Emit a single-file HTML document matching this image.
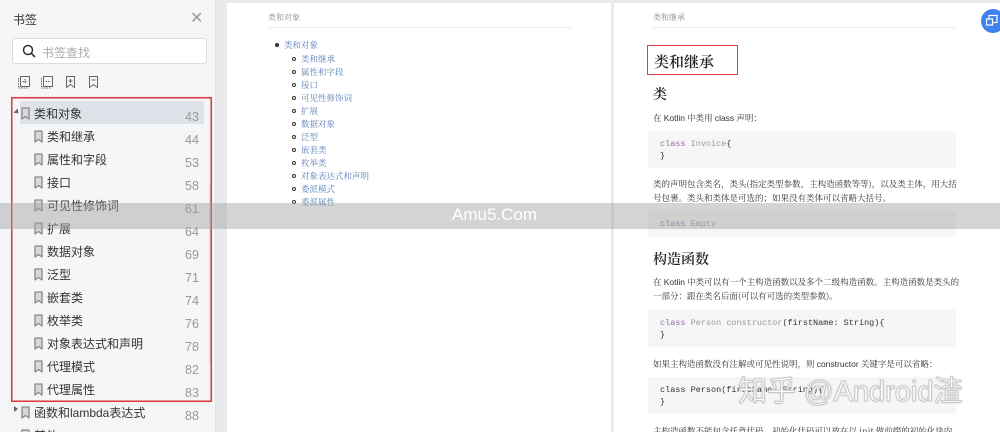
<!DOCTYPE html>
<html><head><meta charset="utf-8"><style>
*{margin:0;padding:0;box-sizing:border-box}
html,body{width:1000px;height:432px;overflow:hidden}
body{background:#e9eaec;font-family:"Liberation Sans","Noto Sans CJK SC",sans-serif;position:relative}
.a{position:absolute}
#side{left:0;top:0;width:216px;height:432px;background:#f5f6f7;border-right:1px solid #e2e3e5}
.it{position:absolute;font-size:12px;color:#333;white-space:nowrap}
.num{position:absolute;font-size:12.5px;color:#999}
.bm{position:absolute}
.page{position:absolute;background:#fff;top:3px;height:440px}
.serif{font-family:"Noto Serif CJK SC","Liberation Serif",serif}
.toc{position:absolute;font-size:8.5px;color:#5b7fb8;font-family:"Noto Serif CJK SC",serif;white-space:nowrap}
.dot{position:absolute;width:4px;height:4px;border:1px solid #333;border-radius:50%}
.p{position:absolute;font-size:8.5px;color:#333;white-space:nowrap;font-family:"Noto Serif CJK SC",serif}
.code{position:absolute;left:648px;width:308px;background:#f6f6f7;font-family:"Liberation Mono",monospace;font-size:8.5px;color:#333;padding:0 0 0 12px;line-height:12px}
.k{color:#9a6aa8}.g{color:#999}
</style></head><body>
<div id="side" class="a">
  <div class="a" style="left:13px;top:11px;font-size:12px;color:#333">书签</div>
  <div class="a" style="left:190px;top:8px;font-size:16px;color:#999">✕</div>
  <div class="a" style="left:12px;top:38px;width:195px;height:26px;background:#fff;border:1px solid #dcdcdc;border-radius:3px"></div>
  <svg class="a" style="left:22px;top:44px" width="14" height="14"><circle cx="6" cy="6" r="4.5" fill="none" stroke="#333" stroke-width="1.5"/><line x1="9.3" y1="9.3" x2="13" y2="13" stroke="#333" stroke-width="1.6"/></svg>
  <div class="a" style="left:42px;top:44px;font-size:12px;color:#aaa">书签查找</div>
  <svg class="a" style="left:17px;top:74px" width="90" height="16" fill="none" stroke="#666" stroke-width="1">
    <rect x="3.5" y="2.5" width="9" height="10"/><path d="M8 5v5M5.5 7.5h5M1.5 4v10h10" stroke-dasharray="1.5 1"/>
    <rect x="26.5" y="2.5" width="9" height="10"/><path d="M28.5 7.5h5M24.5 4v10h10" stroke-dasharray="1.5 1"/>
    <path d="M49.5 2.5h8v11l-4-3-4 3z"/><path d="M53.5 5v4M51.5 7h4"/>
    <path d="M72.5 2.5h8v11l-4-3-4 3z"/><path d="M74.5 6h4"/>
  </svg>
  <div class="a" style="left:20px;top:101px;width:184px;height:23px;background:#dfe2e8"></div>
  <div class="a" style="left:209px;top:183px;width:3px;height:180px;background:#e4e4e4"></div>
  <div class="a" style="left:14px;top:110px;border-left:3px solid transparent;border-right:3px solid transparent;border-top:4px solid #666;transform:rotate(-45deg)"></div>
  <div class="a" style="left:14px;top:406px;border-top:3.5px solid transparent;border-bottom:3.5px solid transparent;border-left:4px solid #666"></div>
</div>
<div id="items"></div>
<svg class="a" style="left:0;top:0" width="220" height="410"><rect x="11.75" y="97.75" width="199.5" height="303.5" fill="none" stroke="#d9403f" stroke-width="1.6"/></svg>
<script>
const L=[["类和对象",43,0],["类和继承",44,1],["属性和字段",53,1],["接口",58,1],["可见性修饰词",61,1],["扩展",64,1],["数据对象",69,1],["泛型",71,1],["嵌套类",74,1],["枚举类",76,1],["对象表达式和声明",78,1],["代理模式",82,1],["代理属性",83,1],["函数和lambda表达式",88,0],["其他",90,0]];
let h="";L.forEach((e,i)=>{const y=105+i*23;const x=e[2]?47:34;
h+=`<svg class="bm" style="left:${x-13}px;top:${y+2}px" width="9" height="13"><path d="M1 1h7v11l-3.5-2.5L1 12z" fill="#d8d8d8" stroke="#888" stroke-width="1.3" stroke-linejoin="round"/></svg><div class="it" style="left:${x}px;top:${y}px">${e[0]}</div><div class="num" style="left:185px;top:${y+5}px">${e[1]}</div>`});
document.getElementById("items").innerHTML=h;
</script>
<div class="page" style="left:227px;width:384px"></div>
<div class="page" style="left:614px;width:386px"></div>
<div class="a serif" style="left:268px;top:12px;font-size:8px;color:#888">类和对象</div>
<div class="a" style="left:267px;top:27px;width:305px;height:1px;background:#eee"></div>
<div class="dot" style="left:275px;top:43px;background:#333"></div>
<div class="toc" style="left:284px;top:39px">类和对象</div>
<div id="toc"></div>
<script>
const T=["类和继承","属性和字段","接口","可见性修饰词","扩展","数据对象","泛型","嵌套类","枚举类","对象表达式和声明","委派模式","委派属性"];
let t="";T.forEach((s,i)=>{const y=53+i*13;t+=`<div class="dot" style="left:292px;top:${y+4}px"></div><div class="toc" style="left:301px;top:${y}px">${s}</div>`});
document.getElementById("toc").innerHTML=t;
</script>
<div class="a serif" style="left:653px;top:12px;font-size:8px;color:#888">类和继承</div>
<div class="a" style="left:652px;top:27px;width:304px;height:1px;background:#eee"></div>
<div class="a" style="left:647px;top:45px;width:91px;height:30px;border:1.5px solid #d9403f"></div>
<div class="a serif" style="left:654px;top:51px;font-size:15px;color:#222;font-weight:600">类和继承</div>
<div class="a serif" style="left:653px;top:84px;font-size:14px;color:#222;font-weight:600">类</div>
<div class="p" style="left:653px;top:112px">在 <span style="font-family:Liberation Sans">Kotlin</span> 中类用 <span style="font-family:Liberation Sans">class</span> 声明：</div>
<div class="code" style="top:131px;height:37px;padding-top:7px"><span class="k">class</span> <span class="g">Invoice</span>{<br>}</div>
<div class="p" style="left:653px;top:178px">类的声明包含类名，类头(指定类型参数，主构造函数等等)，以及类主体，用大括</div>
<div class="p" style="left:653px;top:192px">号包裹。类头和类体是可选的；如果没有类体可以省略大括号。</div>
<div class="code" style="top:211px;height:26px;padding-top:7px"><span class="k">class</span> <span class="g">Empty</span></div>
<div class="a serif" style="left:653px;top:249px;font-size:14px;color:#222;font-weight:600">构造函数</div>
<div class="p" style="left:653px;top:276px">在 <span style="font-family:Liberation Sans">Kotlin</span> 中类可以有一个主构造函数以及多个二级构造函数。主构造函数是类头的</div>
<div class="p" style="left:653px;top:290px">一部分：跟在类名后面(可以有可选的类型参数)。</div>
<div class="code" style="top:310px;height:37px;padding-top:7px"><span class="k">class</span> <span class="g">Person constructor</span>(firstName: String){<br>}</div>
<div class="p" style="left:653px;top:358px">如果主构造函数没有注解或可见性说明，则 <span style="font-family:Liberation Sans">constructor</span> 关键字是可以省略：</div>
<div class="code" style="top:377px;height:37px;padding-top:7px">class Person(firstName: String){<br>}</div>
<div class="p" style="left:653px;top:425px">主构造函数不能包含任意代码，初始化代码可以放在以 init 做前缀的初始化块内</div>
<div class="a" style="left:0;top:203px;width:1000px;height:26px;background:rgba(160,160,160,0.45)"></div>
<div class="a" style="left:452px;top:205px;font-size:17px;color:#fff">Amu5.Com</div>
<div class="a" style="left:738px;top:368px;font-size:29px;color:#fff;white-space:nowrap;-webkit-text-stroke:1px #c8c8c8;text-shadow:0 0 2px #bbb">知乎 @Android渣</div>
<div class="a" style="left:981px;top:9px;width:24px;height:24px;border-radius:50%;background:#3e82ee"></div>
<svg class="a" style="left:985px;top:14px" width="14" height="14" fill="none" stroke="#fff" stroke-width="1.2"><rect x="4" y="1.5" width="8" height="7"/><rect x="1.5" y="5" width="6" height="6" fill="#3e82ee"/></svg>
</body></html>
